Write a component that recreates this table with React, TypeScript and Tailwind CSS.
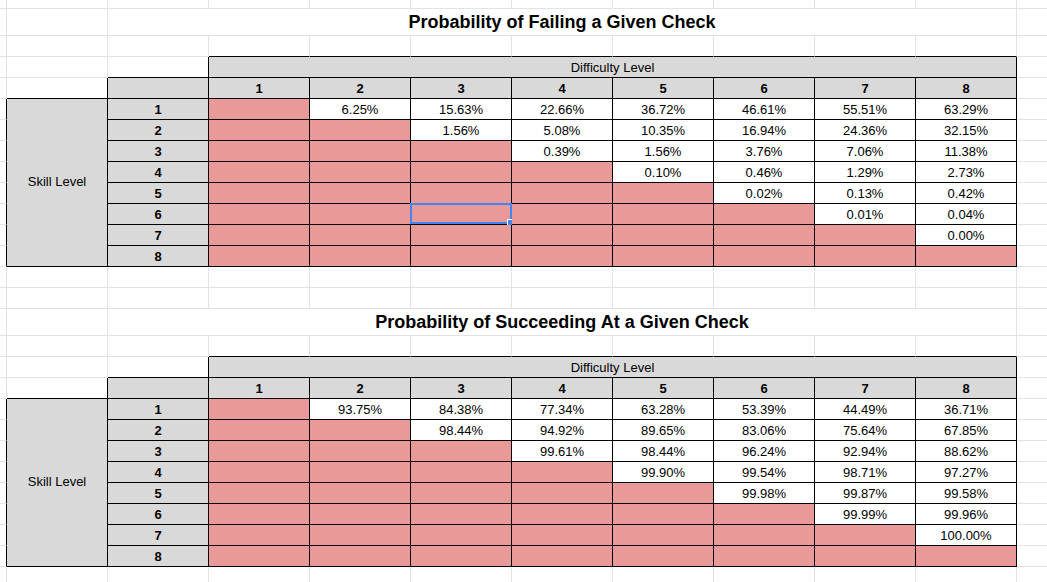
import React from 'react';

// upper-triangle values, row = skill level, starting at difficulty = skill + 1
const failing: string[][] = [
  ['6.25%', '15.63%', '22.66%', '36.72%', '46.61%', '55.51%', '63.29%'],
  ['1.56%', '5.08%', '10.35%', '16.94%', '24.36%', '32.15%'],
  ['0.39%', '1.56%', '3.76%', '7.06%', '11.38%'],
  ['0.10%', '0.46%', '1.29%', '2.73%'],
  ['0.02%', '0.13%', '0.42%'],
  ['0.01%', '0.04%'],
  ['0.00%'],
  [],
];

const succeeding: string[][] = [
  ['93.75%', '84.38%', '77.34%', '63.28%', '53.39%', '44.49%', '36.71%'],
  ['98.44%', '94.92%', '89.65%', '83.06%', '75.64%', '67.85%'],
  ['99.61%', '98.44%', '96.24%', '92.94%', '88.62%'],
  ['99.90%', '99.54%', '98.71%', '97.27%'],
  ['99.98%', '99.87%', '99.58%'],
  ['99.99%', '99.96%'],
  ['100.00%'],
  [],
];

const TABLES = [
  { title: 'Probability of Failing a Given Check', titleRow: 1, top: 3, data: failing },
  { title: 'Probability of Succeeding At a Given Check', titleRow: 15, top: 17, data: succeeding },
];

const ROWS = 28;
const COLS = 12;

const boxed = (r: number, c: number) =>
  TABLES.some(({ top: t }) => {
    if (r === t) return c >= 3 && c <= 10;
    if (r === t + 1) return c >= 2 && c <= 10;
    if (r >= t + 2 && r <= t + 9) return c >= 1 && c <= 10;
    return false;
  });

const covered = (r: number, c: number) =>
  TABLES.some(({ titleRow, top: t }) => {
    if (r === titleRow) return c >= 3 && c <= 10;
    if (r === t) return c >= 4 && c <= 10;
    if (r >= t + 3 && r <= t + 9) return c === 1;
    return false;
  });

type Fill = 'white' | 'gray' | 'pink';

interface CellInfo {
  text?: string;
  fill: Fill;
  bold?: boolean;
  kind: 'plain' | 'title' | 'diff' | 'skill';
  selected?: boolean;
}

function cellInfo(r: number, c: number): CellInfo {
  for (const tb of TABLES) {
    const t = tb.top;
    if (r === tb.titleRow && c === 2) return { text: tb.title, fill: 'white', kind: 'title' };
    if (r === t && c === 3) return { text: 'Difficulty Level', fill: 'gray', kind: 'diff' };
    if (r === t + 1 && c === 2) return { fill: 'gray', kind: 'plain' };
    if (r === t + 1 && c >= 3 && c <= 10) return { text: String(c - 2), fill: 'gray', bold: true, kind: 'plain' };
    if (r >= t + 2 && r <= t + 9) {
      const i = r - t - 2;
      if (c === 1 && i === 0) return { text: 'Skill Level', fill: 'gray', kind: 'skill' };
      if (c === 2) return { text: String(i + 1), fill: 'gray', bold: true, kind: 'plain' };
      if (c >= 3 && c <= 10) {
        const j = c - 3;
        const selected = tb.top === 3 && i === 5 && j === 2;
        if (j <= i) return { fill: 'pink', kind: 'plain', selected };
        return { text: tb.data[i][j - i - 1], fill: 'white', kind: 'plain' };
      }
    }
  }
  return { fill: 'white', kind: 'plain' };
}

const fillClass: Record<Fill, string> = {
  white: 'bg-white',
  gray: 'bg-[#d9d9d9]',
  pink: 'bg-[#ea9999]',
};

const Cell: React.FC<{ r: number; c: number }> = ({ r, c }) => {
  const info = cellInfo(r, c);
  const right = c === COLS - 1 ? 'border-r-0' : boxed(r, c) || boxed(r, c + 1) ? 'border-r border-r-black' : 'border-r border-r-[#e2e3e3]';
  const bottom = boxed(r, c) || boxed(r + 1, c) ? 'border-b border-b-black' : 'border-b border-b-[#e2e3e3]';

  const span =
    info.kind === 'title' ? 'col-span-9' : info.kind === 'diff' ? 'col-span-8' : info.kind === 'skill' ? 'row-span-8' : '';
  const align = info.kind === 'skill' ? 'items-center' : 'items-end';
  const text =
    info.kind === 'title'
      ? 'text-[18px] leading-[21px] font-bold pb-[2px]'
      : `text-[13px] leading-[15px] pb-[2px] ${info.bold ? 'font-bold' : ''}`;

  return (
    <div className={`relative flex justify-center overflow-visible whitespace-nowrap ${align} ${span} ${right} ${bottom} ${fillClass[info.fill]} ${text}`}>
      {info.text}
      {info.selected && (
        <div className="absolute -left-px -top-px w-[102px] h-[21px] border-2 border-[#4285f4]">
          <div className="absolute -right-[4px] -bottom-[4px] w-[7px] h-[7px] bg-[#4285f4] border border-white" />
        </div>
      )}
    </div>
  );
};

export default function App() {
  const cells: React.ReactNode[] = [];
  for (let r = 0; r < ROWS; r++) {
    for (let c = 0; c < COLS; c++) {
      if (covered(r, c)) continue;
      cells.push(<Cell key={`${r}-${c}`} r={r} c={c} />);
    }
  }

  return (
    <div className="w-[1047px] h-[582px] overflow-hidden bg-white text-black font-['Liberation_Sans',Arial,sans-serif]">
      <div className="grid grid-cols-[7px_repeat(10,101px)_1fr] grid-rows-[9px_27px_repeat(13,21px)_27px_repeat(12,21px)]">
        {cells}
      </div>
    </div>
  );
}
